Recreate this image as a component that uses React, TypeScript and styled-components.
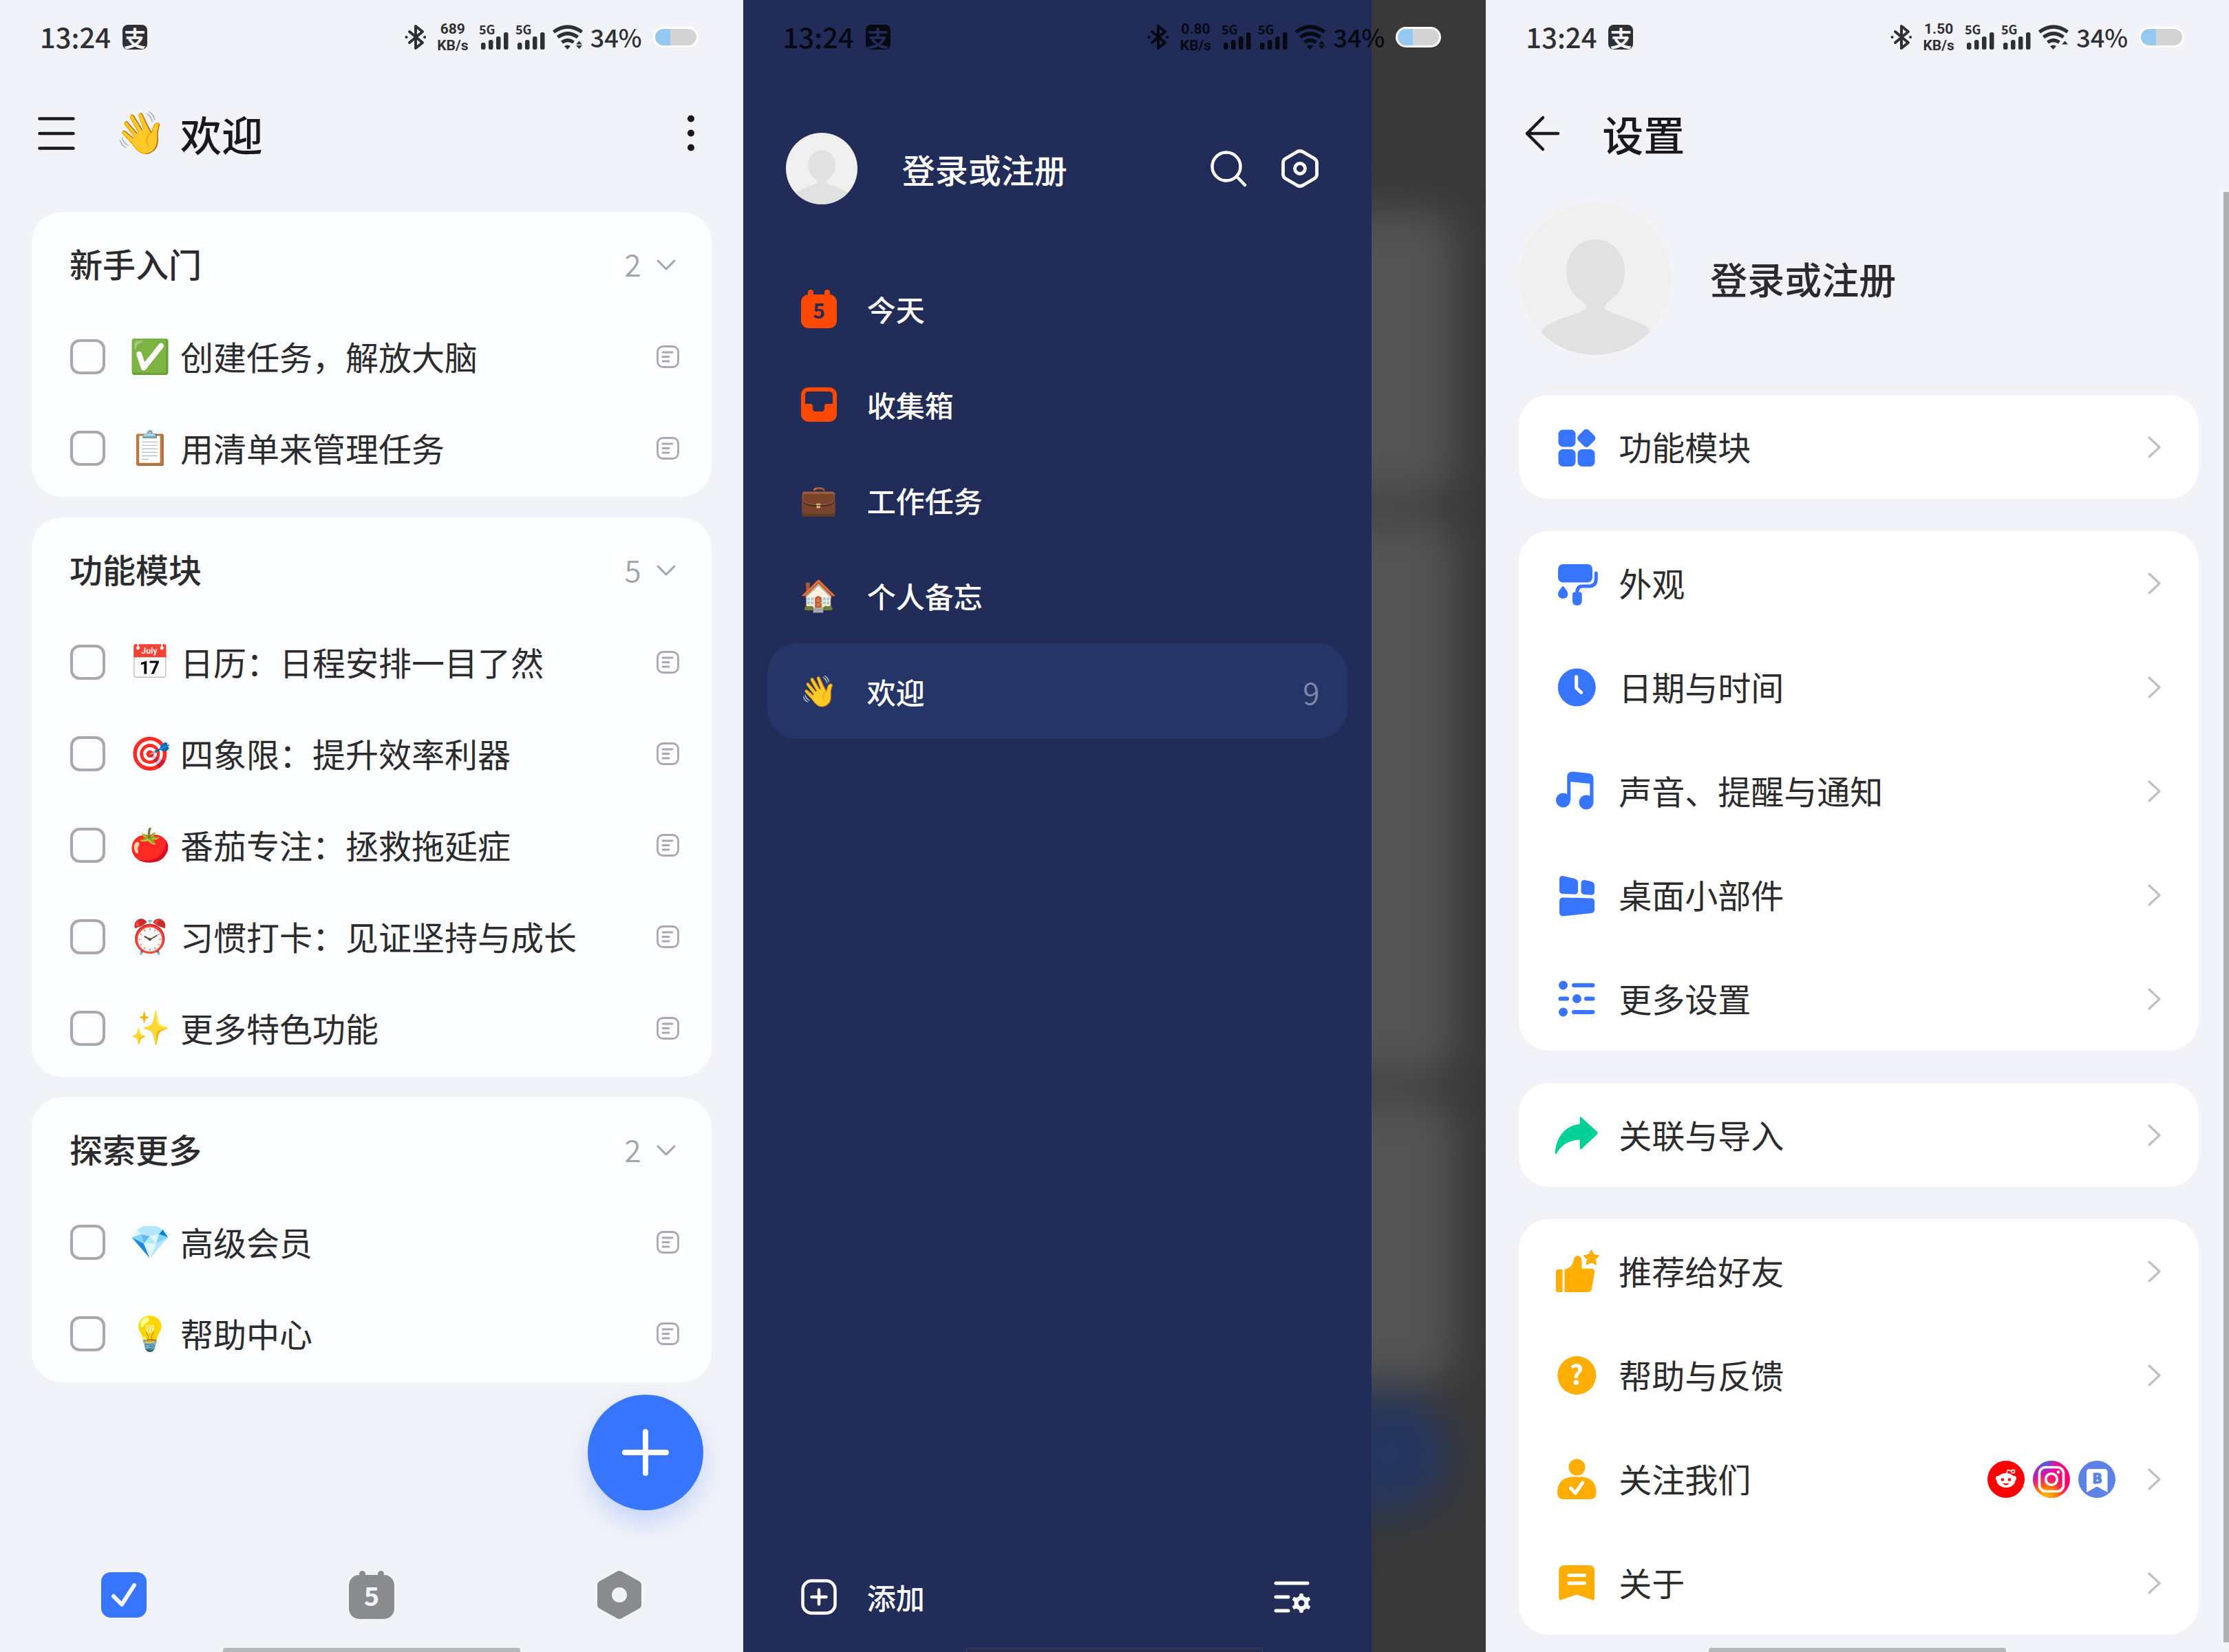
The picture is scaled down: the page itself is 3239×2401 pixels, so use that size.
import React from "react";
import styled, { createGlobalStyle } from "styled-components";

const GlobalStyle = createGlobalStyle`
  *, *::before, *::after { box-sizing: border-box; }
  body {
    margin: 0;
    background: #f2f3f8;
    color: #2b2b2d;
    font-family: "Noto Sans CJK SC", "Noto Sans", sans-serif;
  }
  button {
    display: flex;
    align-items: center;
    margin: 0;
    padding: 0;
    border: 0;
    background: none;
    color: inherit;
    font: inherit;
    text-align: left;
    cursor: pointer;
  }
  h1, h2, ul { margin: 0; padding: 0; font: inherit; }
  ul { list-style: none; }
  svg { display: block; flex: none; overflow: visible; }
`;

/* ---------- shared layout ---------- */

const Page = styled.div`
  display: grid;
  grid-template-columns: repeat(3, minmax(0, 1fr));
  min-height: 100vh;
`;

const Screen = styled.section`
  position: relative;
  display: flex;
  flex-direction: column;
  overflow: hidden;
  background: #f2f3f8;
`;

const AppBar = styled.header<{ $gap: number }>`
  display: flex;
  align-items: center;
  gap: ${(p) => p.$gap}px;
  height: 172px;
  padding: 0 55px;
  color: #19191b;
`;

const Title = styled.h1`
  display: flex;
  flex: 1;
  align-items: center;
  gap: 20px;
  font-size: 60px;
  line-height: 80px;
  font-weight: 500;
`;

const HomeIndicator = styled.div<{ $dim?: boolean }>`
  position: absolute;
  z-index: 2;
  bottom: 0;
  left: 30%;
  right: 30%;
  height: 6px;
  border: ${(p) => (p.$dim ? "1px solid #38416a" : "0")};
  border-bottom: 0;
  border-radius: 4px 4px 0 0;
  background: ${(p) => (p.$dim ? "#2b2d4f" : "#b5b7bb")};
`;

const Emoji = styled.span<{ $size: number }>`
  display: flex;
  flex: none;
  justify-content: center;
  width: ${(p) => p.$size}px;
  font-family: "Noto Color Emoji", "Noto Sans CJK SC", sans-serif;
`;

/* ---------- status bar ---------- */

const StatusRow = styled.div<{ $dark?: boolean }>`
  ${(p) => (p.$dark ? "position: absolute; inset: 0 0 auto 0; z-index: 2;" : "")}
  display: flex;
  align-items: center;
  height: 108px;
  padding: 0 65px 0 58px;
  color: ${(p) => (p.$dark ? "#060812" : "#2f3033")};
`;

const Clock = styled.span`
  flex: 1;
  display: flex;
  align-items: center;
  gap: 17px;
  font-size: 40px;
  line-height: 48px;
  font-weight: 500;
`;

const Time = styled.time`
  padding-bottom: 2px;
`;

const PayBadge = styled.span<{ $dark?: boolean }>`
  display: flex;
  align-items: center;
  justify-content: center;
  width: 36px;
  height: 36px;
  border-radius: 8px;
  background: currentColor;
  & > span {
    color: ${(p) => (p.$dark ? "#212c59" : "#f2f3f8")};
    font-size: 32px;
    line-height: 36px;
    font-weight: 700;
  }
`;

const StatusIcons = styled.div`
  display: flex;
  align-items: center;
  gap: 10px;
`;

const Speed = styled.span`
  display: flex;
  flex-direction: column;
  align-items: center;
  width: 56px;
  font-family: Roboto, sans-serif;
  font-size: 21px;
  line-height: 24px;
  font-weight: 700;
`;

const Percent = styled.span`
  padding-bottom: 2px;
  font-size: 36px;
  line-height: 48px;
  font-weight: 500;
`;

const Battery = styled.span`
  width: 66px;
  height: 30px;
  margin-left: 6px;
  border: 3px solid #fff;
  border-radius: 15px;
  background: linear-gradient(90deg, #94c8f0 0 22px, #d3d3d3 22px);
`;

const Signal = () => (
  <svg width="43" height="38" viewBox="0 0 43 38" fill="currentColor">
    <text x="0" y="15" fontSize="18" fontWeight="700">5G</text>
    <rect x="3" y="27" width="6.5" height="10" rx="2.5" />
    <rect x="14" y="23" width="6.5" height="14" rx="2.5" />
    <rect x="25" y="18" width="6.5" height="19" rx="2.5" />
    <rect x="36" y="12" width="6.5" height="25" rx="2.5" />
  </svg>
);

const StatusBar = ({ speed, dark, upload }: { speed: string; dark?: boolean; upload?: boolean }) => (
  <StatusRow $dark={dark}>
    <Clock>
      <Time>13:24</Time>
      <PayBadge $dark={dark}><span>支</span></PayBadge>
    </Clock>
    <StatusIcons>
      <svg width="32" height="38" viewBox="0 0 32 38" fill="none" stroke="currentColor" strokeWidth="4" strokeLinejoin="round" strokeLinecap="round">
        <path d="M7 11L26 27L16 35V3L26 11L7 27" />
        <path d="M2.5 19h.1M29 19h.1" />
      </svg>
      <Speed><span>{speed}</span><span>KB/s</span></Speed>
      <Signal />
      <Signal />
      <svg width="46" height="38" viewBox="0 0 46 38" fill="none" stroke="currentColor" strokeWidth="5.2">
        <path d="M2.5 11.5Q23 -3.5 43.5 11.5" />
        <path d="M8.5 19Q23 8.5 37.5 19" />
        <path d="M14.5 26.5Q23 20.5 31.5 26.5" />
        <path d="M18 32Q22.5 29 27 32L22.5 37Z" fill="currentColor" stroke="none" />
        <path d="M39.5 24.5L44 29.5H35Z" fill="currentColor" stroke="none" />
        {!upload && <path d="M39.5 36L44 31H35Z" fill="currentColor" stroke="none" />}
      </svg>
      <Percent>34%</Percent>
      <Battery />
    </StatusIcons>
  </StatusRow>
);

/* ---------- tasks screen ---------- */

const TaskList = styled.main`
  display: flex;
  flex-direction: column;
  gap: 30px;
  padding: 28px 46px 0;
`;

const TaskCard = styled.section`
  padding: 10px 0 4px;
  border-radius: 44px;
  background: #fcfdfe;
`;

const GroupHeader = styled.button`
  && {
    width: 100%;
    height: 134px;
    padding: 0 52px 0 55px;
  }
`;

const GroupName = styled.span`
  flex: 1;
  padding-bottom: 6px;
  font-size: 48px;
  line-height: 64px;
  font-weight: 500;
`;

const Count = styled.span`
  margin-right: 22px;
  padding-bottom: 4px;
  color: #a3a4a6;
  font-size: 44px;
  line-height: 64px;
  font-weight: 350;
`;

const TaskRow = styled.li`
  display: flex;
  align-items: center;
  height: 133px;
  padding: 0 47px 0 56px;
`;

const Check = styled.input`
  appearance: none;
  flex: none;
  width: 51px;
  height: 51px;
  margin: 0;
  border: 4px solid #a9a9ab;
  border-radius: 14px;
  background: transparent;
  &:checked { background: #3875ff; border-color: #3875ff; }
`;

const TaskLabel = styled.label`
  display: flex;
  flex: 1;
  align-items: center;
  gap: 14px;
  padding-left: 35px;
  font-size: 48px;
  line-height: 64px;
`;

const TaskText = styled.span`
  padding-bottom: 4px;
`;

const ChevronDown = () => (
  <svg width="28" height="16" viewBox="0 0 28 16" fill="none" stroke="#a3a4a6" strokeWidth="3" strokeLinecap="round" strokeLinejoin="round">
    <path d="M2 2L14 14L26 2" />
  </svg>
);

const NoteIcon = () => (
  <svg width="33" height="33" viewBox="0 0 33 33" fill="none" stroke="#a9a9ab" strokeWidth="2.8" strokeLinecap="round">
    <rect x="1.5" y="1.5" width="30" height="30" rx="8" />
    <path d="M9 10h14M9 16.5h9M9 23h9" />
  </svg>
);

const AddButton = styled.button`
  && {
    position: absolute;
    right: 58px;
    bottom: 206px;
    justify-content: center;
    width: 168px;
    height: 168px;
    border-radius: 50%;
    background: #3875ff;
    box-shadow: 0 18px 36px rgba(56, 117, 255, 0.24);
  }
`;

const TabBar = styled.nav`
  display: grid;
  grid-template-columns: repeat(3, 1fr);
  height: 166px;
  margin-top: auto;
  & > button { justify-content: center; }
`;

const groups = [
  { name: "新手入门", tasks: [["✅", "创建任务，解放大脑"], ["📋", "用清单来管理任务"]] },
  {
    name: "功能模块",
    tasks: [
      ["📅", "日历：日程安排一目了然"],
      ["🎯", "四象限：提升效率利器"],
      ["🍅", "番茄专注：拯救拖延症"],
      ["⏰", "习惯打卡：见证坚持与成长"],
      ["✨", "更多特色功能"],
    ],
  },
  { name: "探索更多", tasks: [["💎", "高级会员"], ["💡", "帮助中心"]] },
];

const TasksScreen = () => (
  <Screen>
    <StatusBar speed="689" />
    <AppBar $gap={58}>
      <button aria-label="菜单">
        <svg width="54" height="54" viewBox="0 0 54 54" stroke="currentColor" strokeWidth="4.5" strokeLinecap="round">
          <path d="M2.5 5.5h49M2.5 27h49M2.5 48.5h49" />
        </svg>
      </button>
      <Title><Emoji $size={75}>👋</Emoji>欢迎</Title>
      <button aria-label="更多">
        <svg width="42" height="54" viewBox="0 0 42 54" fill="currentColor">
          <circle cx="21" cy="5.5" r="5" />
          <circle cx="21" cy="26.5" r="5" />
          <circle cx="21" cy="47.5" r="5" />
        </svg>
      </button>
    </AppBar>
    <TaskList>
      {groups.map((group, g) => (
        <TaskCard key={group.name}>
          <h2>
            <GroupHeader>
              <GroupName>{group.name}</GroupName>
              <Count>{group.tasks.length}</Count>
              <ChevronDown />
            </GroupHeader>
          </h2>
          <ul>
            {group.tasks.map(([emoji, text], i) => (
              <TaskRow key={text}>
                <Check type="checkbox" id={`task-${g}-${i}`} />
                <TaskLabel htmlFor={`task-${g}-${i}`}>
                  <Emoji $size={60}>{emoji}</Emoji>
                  <TaskText>{text}</TaskText>
                </TaskLabel>
                <NoteIcon />
              </TaskRow>
            ))}
          </ul>
        </TaskCard>
      ))}
    </TaskList>
    <AddButton aria-label="新建任务">
      <svg width="68" height="68" viewBox="0 0 68 68" stroke="#fff" strokeWidth="8" strokeLinecap="round">
        <path d="M34 4v60M4 34h60" />
      </svg>
    </AddButton>
    <TabBar>
      <button aria-label="任务">
        <svg width="66" height="66" viewBox="0 0 66 66" fill="none">
          <rect width="66" height="66" rx="14" fill="#3875ff" />
          <path d="M18 35L30 47L48 19" stroke="#f6f8ff" strokeWidth="6" strokeLinecap="round" strokeLinejoin="round" />
        </svg>
      </button>
      <button aria-label="日历">
        <svg width="66" height="70" viewBox="0 0 66 70" fill="#8a8b8f">
          <rect y="6" width="66" height="64" rx="15" />
          <rect x="15" width="9" height="16" rx="4.5" />
          <rect x="42" width="9" height="16" rx="4.5" />
          <text x="33" y="51" textAnchor="middle" fontSize="38" fontWeight="700" fill="#f2f3f8">5</text>
        </svg>
      </button>
      <button aria-label="设置">
        <svg width="72" height="72" viewBox="0 0 72 72">
          <path d="M36 8L61 22V50L36 64L11 50V22Z" fill="#8a8b8f" stroke="#8a8b8f" strokeWidth="14" strokeLinejoin="round" />
          <circle cx="36" cy="36" r="11" fill="#f2f3f8" />
        </svg>
      </button>
    </TabBar>
    <HomeIndicator />
  </Screen>
);

/* ---------- drawer screen ---------- */

const DrawerScreen = styled(Screen)`
  background: #393939;
`;

const Backdrop = styled.div`
  position: absolute;
  inset: 0;
  display: flex;
  flex-direction: column;
  gap: 30px;
  padding: 308px 46px 0;
  filter: blur(28px);
`;

const GhostCard = styled.div<{ $rows: number }>`
  flex: none;
  height: ${(p) => p.$rows * 133 + 148}px;
  border-radius: 44px;
  background: #545454;
`;

const GhostFab = styled.div`
  position: absolute;
  right: 58px;
  bottom: 206px;
  width: 168px;
  height: 168px;
  border-radius: 50%;
  background: #25365f;
  box-shadow: 0 10px 30px #2c3550;
`;

const Drawer = styled.aside`
  position: relative;
  z-index: 1;
  display: flex;
  flex: 1;
  flex-direction: column;
  width: calc(100% - 166px);
  padding-top: 108px;
  background: #212c59;
  color: #fff;
`;

const Account = styled.header`
  display: flex;
  align-items: center;
  gap: 50px;
  padding: 85px 77px 82px 62px;
`;

const AccountButton = styled.button<{ $gap: number; $size: number }>`
  && {
    flex: 1;
    gap: ${(p) => p.$gap}px;
    font-size: ${(p) => p.$size}px;
    line-height: 72px;
    font-weight: 500;
  }
`;

const DrawerItem = styled.button<{ $active?: boolean }>`
  && {
    gap: 44px;
    width: calc(100% - 70px);
    height: 139px;
    margin: 0 35px;
    padding: 0 41px 0 49px;
    border-radius: 44px;
    background: ${(p) => (p.$active ? "#253568" : "transparent")};
    font-size: 42px;
    line-height: 56px;
    font-weight: 500;
  }
  & > ${Emoji} { font-size: 44px; }
`;

const DrawerCount = styled.span`
  margin-left: auto;
  color: #7f88aa;
  font-size: 44px;
  font-weight: 350;
`;

const DrawerFooter = styled.footer`
  display: flex;
  align-items: center;
  justify-content: space-between;
  height: 160px;
  margin-top: auto;
  padding: 0 88px 0 84px;
`;

const FooterButton = styled.button`
  && {
    gap: 44px;
    font-size: 42px;
    line-height: 56px;
    font-weight: 500;
  }
`;

const Avatar = ({ size }: { size: number }) => (
  <svg width={size} height={size} viewBox="0 0 222 222">
    <defs>
      <clipPath id={`avatar-${size}`}><circle cx="111" cy="111" r="111" /></clipPath>
    </defs>
    <g clipPath={`url(#avatar-${size})`}>
      <rect width="222" height="222" fill="#f0f0f1" />
      <path d="M111 54C135 54 154 74 154 100C154 118 147 132 136 140C128 146 125 150 125 153C125 156 127 157 134 160C150 166 170 172 184 180C192 186 196 196 200 222H22C26 196 32 186 40 180C54 171 72 166 88 160C95 157 98 156 98 153C98 150 95 146 87 140C76 132 69 118 69 100C69 74 87 54 111 54Z" fill="#e1e1e1" />
    </g>
  </svg>
);

const TodayIcon = () => (
  <svg width="52" height="56" viewBox="0 0 52 56" fill="#ff4800">
    <rect y="7" width="52" height="49" rx="11" />
    <rect x="10" width="8" height="16" rx="4" />
    <rect x="34" width="8" height="16" rx="4" />
    <text x="26" y="42" textAnchor="middle" fontSize="30" fontWeight="700" fill="#212c59">5</text>
  </svg>
);

const InboxIcon = () => (
  <svg width="52" height="50" viewBox="0 0 52 50">
    <rect width="52" height="50" rx="11" fill="#ff4800" />
    <path d="M11 6H41Q46 6 46 11V24H37Q34 24 34 27V31Q34 35 30 35H21Q17 35 17 31V27Q17 24 14 24H6V11Q6 6 11 6Z" fill="#212c59" />
  </svg>
);

const drawerItems: { icon: React.ReactNode; label: string; count?: number }[] = [
  { icon: <TodayIcon />, label: "今天" },
  { icon: <InboxIcon />, label: "收集箱" },
  { icon: <Emoji $size={52}>💼</Emoji>, label: "工作任务" },
  { icon: <Emoji $size={52}>🏠</Emoji>, label: "个人备忘" },
  { icon: <Emoji $size={52}>👋</Emoji>, label: "欢迎", count: 9 },
];

const teeth = [0, 60, 120, 180, 240, 300];

const DrawerView = () => (
  <DrawerScreen>
    <Backdrop>
      <GhostCard $rows={2} />
      <GhostCard $rows={5} />
      <GhostCard $rows={2} />
      <GhostFab />
    </Backdrop>
    <StatusBar speed="0.80" dark />
    <Drawer>
      <Account>
        <AccountButton $gap={65} $size={48}><Avatar size={104} />登录或注册</AccountButton>
        <button aria-label="搜索">
          <svg width="54" height="54" viewBox="0 0 54 54" fill="none" stroke="#fff" strokeWidth="4.5" strokeLinecap="round">
            <circle cx="24" cy="24" r="20.5" />
            <path d="M39.5 39L51 51" />
          </svg>
        </button>
        <button aria-label="设置">
          <svg width="54" height="58" viewBox="0 0 54 58" fill="none" stroke="#fff" strokeWidth="4.8">
            <path d="M31 4.5L48 14.5Q51.5 16.7 51.5 20.5V37.5Q51.5 41.3 48 43.5L31 53.5Q27 55.5 23 53.5L6 43.5Q2.5 41.3 2.5 37.5V20.5Q2.5 16.7 6 14.5L23 4.5Q27 2.5 31 4.5Z" />
            <circle cx="27" cy="29" r="7.5" />
          </svg>
        </button>
      </Account>
      <nav>
        {drawerItems.map((item) => (
          <DrawerItem key={item.label} $active={item.count !== undefined}>
            {item.icon}
            {item.label}
            {item.count !== undefined && <DrawerCount>{item.count}</DrawerCount>}
          </DrawerItem>
        ))}
      </nav>
      <DrawerFooter>
        <FooterButton>
          <svg width="52" height="52" viewBox="0 0 52 52" fill="none" stroke="#fff" strokeWidth="4.5" strokeLinecap="round">
            <rect x="2.5" y="2.5" width="47" height="47" rx="13" />
            <path d="M26 15.5v21M15.5 26h21" />
          </svg>
          添加
        </FooterButton>
        <button aria-label="管理清单">
          <svg width="54" height="48" viewBox="0 0 54 48" fill="none" stroke="#fff" strokeWidth="5" strokeLinecap="round">
            <path d="M3 4h46M3 24h18M3 44h18" />
            <circle cx="40" cy="33" r="7.5" strokeWidth="6" />
            {teeth.map((a) => (
              <path key={a} d="M37.2 24L38 19.5H42L42.8 24Z" fill="#fff" strokeWidth="1" strokeLinejoin="round" transform={`rotate(${a} 40 33)`} />
            ))}
          </svg>
        </button>
      </DrawerFooter>
    </Drawer>
    <HomeIndicator $dim />
  </DrawerScreen>
);

/* ---------- settings screen ---------- */

const Profile = styled.div`
  display: flex;
  padding: 14px 48px 58px;
`;

const SettingGroups = styled.main`
  display: flex;
  flex-direction: column;
  gap: 47px;
  padding: 0 44px 25px 48px;
`;

const SettingCard = styled.ul`
  border-radius: 44px;
  background: #fff;
`;

const SettingRow = styled.button`
  && {
    width: 100%;
    height: 151px;
    padding: 0 54px 0 52px;
  }
`;

const SettingLabel = styled.span`
  flex: 1;
  padding: 0 0 4px 29px;
  font-size: 48px;
  line-height: 64px;
`;

const Socials = styled.span`
  display: flex;
  gap: 12px;
  margin-right: 45px;
`;

const Scrollbar = styled.div`
  position: absolute;
  top: 279px;
  right: 0;
  bottom: 14px;
  width: 8px;
  background: #afb1b4;
`;

const ChevronRight = () => (
  <svg width="22" height="34" viewBox="0 0 22 34" fill="none" stroke="#bfc0c2" strokeWidth="3.2" strokeLinecap="round" strokeLinejoin="round">
    <path d="M4 3L19 17L4 31" />
  </svg>
);

const Icon = ({ color, children }: { color: string; children: React.ReactNode }) => (
  <svg width="64" height="64" viewBox="0 0 64 64" fill={color}>{children}</svg>
);

const blue = "#3875ff";
const orange = "#ffad00";

const ModulesIcon = () => (
  <Icon color={blue}>
    <rect x="5.5" y="6.5" width="25" height="25" rx="6.5" />
    <rect x="5.5" y="35" width="25" height="25" rx="6.5" />
    <rect x="33.5" y="35" width="25" height="25" rx="6.5" />
    <rect x="35.5" y="8" width="21.5" height="21.5" rx="5" transform="rotate(45 46.2 18.7)" />
  </Icon>
);

const RollerIcon = () => (
  <Icon color={blue}>
    <rect x="5" y="4" width="50" height="26.5" rx="7" />
    <path d="M60.3 17V25Q60.3 36 50 36H40Q32.7 36 32.7 46" fill="none" stroke={blue} strokeWidth="5" strokeLinecap="round" />
    <path d="M29 44.5H36.5Q39.7 44.5 39.7 48V57Q39.7 64 32.8 64Q26 64 26 57V48Q26 44.5 29 44.5Z" />
    <path d="M12.2 35.5Q19.3 43 19.3 47Q19.3 54 12.2 54Q5 54 5 47Q5 43 12.2 35.5Z" />
  </Icon>
);

const ClockIcon = () => (
  <Icon color={blue}>
    <circle cx="32.3" cy="32" r="27.5" />
    <path d="M31.7 16.5V33L38.7 39.5" fill="none" stroke="#fff" strokeWidth="5" strokeLinecap="round" strokeLinejoin="round" />
  </Icon>
);

const MusicIcon = () => (
  <Icon color={blue}>
    <circle cx="12.5" cy="45" r="10.5" />
    <circle cx="46" cy="48" r="10.5" />
    <path d="M18.3 37V11Q18.3 3.5 26 3.5L50 6Q56.5 6.8 56.5 14V48H51.3V21L23.3 18.2V45L18.3 44Z" />
  </Icon>
);

const WidgetIcon = () => (
  <Icon color={blue}>
    <path d="M13 4.2L29 8Q34 9.5 34 14V26Q34 31 29 30.8L11 30Q7 29.8 7 25V9Q7 3.5 13 4.2Z" />
    <path d="M44 10L53 12Q58 13.5 58 18V27Q58 32 53 31.8L43 31Q38.5 30.8 38.5 26V15Q38.5 9.5 44 10Z" />
    <path d="M12 35.5L53 36.5Q58 36.8 58 41V53Q58 57.5 53 58.3L13 62.5Q7 63 7 57V41Q7 35.5 12 35.5Z" />
  </Icon>
);

const MoreIcon = () => (
  <Icon color={blue}>
    <path d="M28 12H55.5M8.5 31.5H18M46 31.5H55.5M28 51H55.5" stroke={blue} strokeWidth="6" strokeLinecap="round" />
    <circle cx="12.5" cy="12" r="6.5" />
    <circle cx="32.4" cy="31.5" r="6.5" />
    <circle cx="12.5" cy="51" r="6.5" />
  </Icon>
);

const ShareIcon = () => (
  <Icon color="#00d196">
    <path d="M36.6 7.5Q36.6 3.5 39.5 6.5L61.5 26.5Q64 28.8 61.5 31L39.5 51.5Q36.6 54 36.6 50V38.5C23 38.5 10 45 3 58.5Q1 61 .8 57.5C2 35 16 17 36.6 16Z" />
  </Icon>
);

const ThumbIcon = () => (
  <Icon color={orange}>
    <path d="M5 29H11.5V62H5Q2 62 2 59V32Q2 29 5 29Z" />
    <path d="M14.5 29C23 27 27 22 28 14Q29 9 34 9Q39.5 10 39.5 17V27.8H53Q59 28 58 34L54 57Q53 62 48 62H14.5Z" />
    <path d="M53.5 1L56.8 7.6L64 9L59 14.3L60.2 21.7L53.5 18.5L46.5 21.7L47.8 14.3L42.5 9L50 7.6Z" strokeLinejoin="round" stroke={orange} strokeWidth="1.5" />
  </Icon>
);

const HelpIcon = () => (
  <Icon color={orange}>
    <circle cx="32.3" cy="32" r="28" />
    <text x="32" y="46" textAnchor="middle" fontSize="39" fontWeight="700" fill="#fff">?</text>
  </Icon>
);

const FollowIcon = () => (
  <Icon color={orange}>
    <circle cx="32.4" cy="14.5" r="12" />
    <path d="M24 28.5H41Q60.5 31 60.5 52Q60.5 61 51 61H13.5Q4 61 4 52Q4 31 24 28.5Z" />
    <path d="M23.5 45L30.3 52L40.7 37" fill="none" stroke="#fff" strokeWidth="5" strokeLinecap="round" strokeLinejoin="round" />
  </Icon>
);

const AboutIcon = () => (
  <Icon color={orange}>
    <path d="M14 6H50Q58 6 58 14V54Q58 58 54 56L32 48.5L10 56Q6.3 58 6.3 54V14Q6.3 6 14 6Z" />
    <path d="M21 20.5H43.5M21 32H43.5" stroke="#fff" strokeWidth="5" strokeLinecap="round" />
  </Icon>
);

const SocialIcons = () => (
  <Socials>
    <svg width="54" height="54" viewBox="0 0 54 54">
      <circle cx="27" cy="27" r="27" fill="#ff0000" />
      <g fill="#fff">
        <ellipse cx="27" cy="28.5" rx="13.5" ry="10.5" />
        <circle cx="15.5" cy="25.5" r="3.5" />
        <circle cx="38.5" cy="25.5" r="3.5" />
      </g>
      <path d="M27.5 19L29.5 13.5L35 15" fill="none" stroke="#fff" strokeWidth="1.6" />
      <circle cx="37.2" cy="15.5" r="2.3" fill="none" stroke="#fff" strokeWidth="1.6" />
      <circle cx="22" cy="27.5" r="2.2" fill="#ff0000" />
      <circle cx="32" cy="27.5" r="2.2" fill="#ff0000" />
      <path d="M22 33Q27 38 32 33Z" fill="#ff0000" />
    </svg>
    <svg width="54" height="54" viewBox="0 0 54 54" fill="none">
      <defs>
        <linearGradient id="ig-side" x1="0" y1="0" x2="1" y2=".5">
          <stop offset="0" stopColor="#8a35d8" />
          <stop offset=".5" stopColor="#e5129a" />
          <stop offset="1" stopColor="#ff0069" />
        </linearGradient>
        <radialGradient id="ig-warm" cx=".35" cy="1.05" r=".75">
          <stop offset="0" stopColor="#ffd600" />
          <stop offset=".45" stopColor="#ff7a00" />
          <stop offset="1" stopColor="#ff0069" stopOpacity="0" />
        </radialGradient>
        <radialGradient id="ig-cool" cx=".3" cy="0" r=".35">
          <stop offset="0" stopColor="#1488e8" />
          <stop offset="1" stopColor="#7638fa" stopOpacity="0" />
        </radialGradient>
      </defs>
      <circle cx="27" cy="27" r="27" fill="url(#ig-side)" />
      <circle cx="27" cy="27" r="27" fill="url(#ig-warm)" />
      <circle cx="27" cy="27" r="27" fill="url(#ig-cool)" />
      <g stroke="#fff" strokeWidth="3.6">
        <rect x="9.5" y="9.5" width="35" height="35" rx="9" />
        <circle cx="27" cy="27" r="8.3" />
      </g>
      <circle cx="37" cy="16.5" r="2.3" fill="#fff" />
    </svg>
    <svg width="54" height="54" viewBox="0 0 54 54">
      <circle cx="27" cy="27" r="27" fill="#5b82e4" />
      <path d="M16 12H38Q42.5 12 42.5 16.5V46L27 37.5L12 46V16.5Q12 12 16 12Z" fill="#fff" />
      <text x="27.5" y="33" textAnchor="middle" fontSize="20" fontWeight="900" fill="#5b82e4" stroke="#5b82e4" strokeWidth="1">B</text>
    </svg>
  </Socials>
);

const settings: { icon: React.ReactNode; label: string; extra?: React.ReactNode }[][] = [
  [{ icon: <ModulesIcon />, label: "功能模块" }],
  [
    { icon: <RollerIcon />, label: "外观" },
    { icon: <ClockIcon />, label: "日期与时间" },
    { icon: <MusicIcon />, label: "声音、提醒与通知" },
    { icon: <WidgetIcon />, label: "桌面小部件" },
    { icon: <MoreIcon />, label: "更多设置" },
  ],
  [{ icon: <ShareIcon />, label: "关联与导入" }],
  [
    { icon: <ThumbIcon />, label: "推荐给好友" },
    { icon: <HelpIcon />, label: "帮助与反馈" },
    { icon: <FollowIcon />, label: "关注我们", extra: <SocialIcons /> },
    { icon: <AboutIcon />, label: "关于" },
  ],
];

const SettingsScreen = () => (
  <Screen>
    <StatusBar speed="1.50" upload />
    <AppBar $gap={60}>
      <button aria-label="返回">
        <svg width="54" height="54" viewBox="0 0 54 54" fill="none" stroke="currentColor" strokeWidth="4.5" strokeLinecap="round" strokeLinejoin="round">
          <path d="M28 4L5 27L28 50M5 27H50" />
        </svg>
      </button>
      <Title>设置</Title>
    </AppBar>
    <Profile>
      <AccountButton $gap={56} $size={54}><Avatar size={222} />登录或注册</AccountButton>
    </Profile>
    <SettingGroups>
      {settings.map((group, g) => (
        <SettingCard key={g}>
          {group.map((row) => (
            <li key={row.label}>
              <SettingRow>
                {row.icon}
                <SettingLabel>{row.label}</SettingLabel>
                {row.extra}
                <ChevronRight />
              </SettingRow>
            </li>
          ))}
        </SettingCard>
      ))}
    </SettingGroups>
    <Scrollbar />
    <HomeIndicator />
  </Screen>
);

const App = () => (
  <>
    <GlobalStyle />
    <Page>
      <TasksScreen />
      <DrawerView />
      <SettingsScreen />
    </Page>
  </>
);

export default App;
